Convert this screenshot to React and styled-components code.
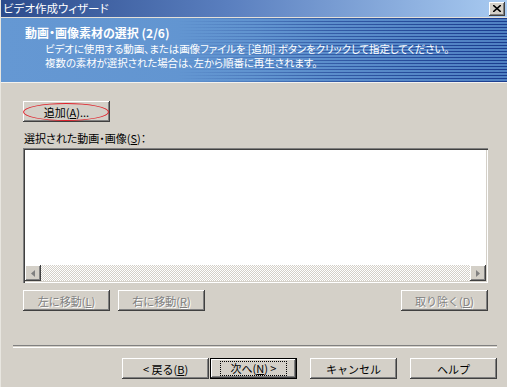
import React from "react";
import styled, { createGlobalStyle } from "styled-components";

const GlobalStyle = createGlobalStyle`
  html, body {
    margin: 0;
    padding: 0;
    background: #d4d0c8;
  }
  body {
    font-family: "Noto Sans CJK JP", "DejaVu Sans", sans-serif;
    font-size: 12px;
    font-feature-settings: "palt";
  }
`;

const Window = styled.div`
  width: 507px;
  height: 387px;
  background: #d4d0c8;
  display: flex;
  flex-direction: column;
  overflow: hidden;
  box-sizing: border-box;
  border-left: 1px solid #e8e6e0;
`;

const TitleBar = styled.div`
  height: 17px;
  display: flex;
  align-items: center;
  justify-content: space-between;
  padding: 0 2px 0 2px;
  background: linear-gradient(to right, #2c4b8c 0%, #5a7fbf 45%, #a9cbf1 100%);
  color: #fff;
  font-size: 11.5px;
  line-height: 17px;
  border-bottom: 1px solid #e4e0d8;
`;

const CloseBox = styled.div`
  width: 16px;
  height: 14px;
  background: #d4d0c8;
  box-shadow: inset -1px -1px #404040, inset 1px 1px #fff, inset -2px -2px #808080;
  display: flex;
  align-items: center;
  justify-content: center;
  svg { display: block; }
`;

const Header = styled.div`
  position: relative;
  height: 65px;
  padding: 6px 0 0 24px;
  box-sizing: border-box;
  background: linear-gradient(to right, #6598d3 0%, #6194d0 50%, #4f80c2 100%);
  color: #fff;
  border-bottom: 1px solid #f4f2ee;
  overflow: hidden;

  &::after {
    content: "";
    position: absolute;
    inset: 0;
    background: repeating-linear-gradient(
      to bottom,
      #1b3c8e 0px,
      #1b3c8e 1px,
      transparent 1px,
      transparent 3px
    );
    -webkit-mask-image: linear-gradient(to right, transparent 35%, rgba(0,0,0,0.6) 65%, #000 100%);
    mask-image: linear-gradient(to right, transparent 35%, rgba(0,0,0,0.6) 65%, #000 100%);
  }
`;

const HeaderText = styled.div`
  position: relative;
  z-index: 1;
`;

const HeaderTitle = styled.div`
  font-weight: bold;
  font-size: 12px;
  line-height: 18px;
`;

const HeaderLine = styled.div`
  padding-left: 20px;
  font-size: 10.5px;
  line-height: 14px;
  height: 14px;
  letter-spacing: -0.1px;
  white-space: nowrap;
`;

const Body = styled.div`
  display: flex;
  flex-direction: column;
  padding: 18px 20px 0 22px;
`;

const ButtonWrap = styled.div`
  position: relative;
  align-self: flex-start;
`;

const Button = styled.button`
  width: ${(p) => p.$w || 87}px;
  height: 21px;
  padding: 0;
  border: none;
  background: #d4d0c8;
  font-family: inherit;
  font-size: 11px;
  color: ${(p) => (p.disabled ? "#808080" : "#000")};
  text-shadow: ${(p) => (p.disabled ? "1px 1px 0 #fff" : "none")};
  box-shadow: ${(p) =>
    p.$default
      ? "inset 0 0 0 1px #000, inset -2px -2px #404040, inset 2px 2px #fff, inset -3px -3px #808080"
      : "inset -1px -1px #404040, inset 1px 1px #fff, inset -2px -2px #808080"};
  display: flex;
  align-items: center;
  justify-content: center;
  position: relative;
`;

const Focus = styled.span`
  border: 1px dotted #000;
  padding: 0 10px;
  line-height: 13px;
`;

const Ring = styled.div`
  position: absolute;
  left: 0;
  top: 2px;
  width: 86px;
  height: 18px;
  border: 1px solid #e0202a;
  border-radius: 50%;
  box-sizing: border-box;
  pointer-events: none;
`;

const Label = styled.div`
  margin-top: 9px;
  font-size: 11px;
  line-height: 15px;
  margin-left: 1px;
`;

const ListBox = styled.div`
  margin-top: 2px;
  width: 465px;
  height: 135px;
  box-sizing: border-box;
  background: #fff;
  box-shadow: inset 1px 1px #808080, inset 2px 2px #404040, inset -1px -1px #fff, inset -2px -2px #d4d0c8;
  padding: 2px;
  display: flex;
  flex-direction: column;
  justify-content: flex-end;
`;

const ScrollBar = styled.div`
  height: 16px;
  display: flex;
  background-color: #fff;
  background-image: conic-gradient(#d4d0c8 25%, #fff 0 50%, #d4d0c8 0 75%, #fff 0);
  background-size: 2px 2px;
`;

const ScrollTrack = styled.div`
  flex: 1;
`;

const ArrowBox = styled.div`
  width: 16px;
  height: 16px;
  background: #d4d0c8;
  box-shadow: inset -1px -1px #404040, inset 1px 1px #fff, inset -2px -2px #808080;
  display: flex;
  align-items: center;
  justify-content: center;
  svg { display: block; }
`;

const ActionRow = styled.div`
  margin-top: 7px;
  width: 465px;
  display: flex;
  gap: 8px;
`;

const Spacer = styled.div`
  flex: 1;
`;

const Separator = styled.div`
  margin: 34px 10px 0 12px;
  height: 1px;
  border-top: 1px solid #808080;
  border-bottom: 1px solid #fff;
`;

const Footer = styled.div`
  margin-top: 10px;
  display: flex;
  padding-left: 121px;
`;

const FooterGap = styled.div`
  width: ${(p) => p.$w}px;
`;

const Arrow = ({ dir }) => (
  <svg width="4" height="7" viewBox="0 0 4 7">
    {dir === "left" ? (
      <path d="M4 0 L0 3.5 L4 7 Z" fill="#808080" />
    ) : (
      <path d="M0 0 L4 3.5 L0 7 Z" fill="#808080" />
    )}
  </svg>
);

const U = styled.span`
  text-decoration: underline;
`;

export default function App() {
  return (
    <>
      <GlobalStyle />
      <Window>
        <TitleBar>
          <span>ビデオ作成ウィザード</span>
          <CloseBox>
            <svg width="8" height="7" viewBox="0 0 8 7">
              <path d="M0 0 L8 7 M8 0 L0 7" stroke="#000" strokeWidth="1.6" />
            </svg>
          </CloseBox>
        </TitleBar>
        <Header>
          <HeaderText>
            <HeaderTitle>動画・画像素材の選択 (2/6)</HeaderTitle>
            <HeaderLine>
              ビデオに使用する動画、または画像ファイルを [追加] ボタンをクリックして指定してください。
            </HeaderLine>
            <HeaderLine>複数の素材が選択された場合は、左から順番に再生されます。</HeaderLine>
          </HeaderText>
        </Header>
        <Body>
          <ButtonWrap>
            <Button>
              追加(<U>A</U>)...
            </Button>
            <Ring />
          </ButtonWrap>
          <Label>
            選択された動画・画像(<U>S</U>)：
          </Label>
          <ListBox>
            <ScrollBar>
              <ArrowBox>
                <Arrow dir="left" />
              </ArrowBox>
              <ScrollTrack />
              <ArrowBox>
                <Arrow dir="right" />
              </ArrowBox>
            </ScrollBar>
          </ListBox>
          <ActionRow>
            <Button disabled>
              左に移動(<U>L</U>)
            </Button>
            <Button disabled>
              右に移動(<U>R</U>)
            </Button>
            <Spacer />
            <Button disabled>
              取り除く(<U>D</U>)
            </Button>
          </ActionRow>
        </Body>
        <Separator />
        <Footer>
          <Button>
            &lt; 戻る(<U>B</U>)
          </Button>
          <FooterGap $w={1} />
          <Button $default>
            <Focus>
              次へ(<U>N</U>) &gt;
            </Focus>
          </Button>
          <FooterGap $w={13} />
          <Button>キャンセル</Button>
          <FooterGap $w={13} />
          <Button>ヘルプ</Button>
        </Footer>
      </Window>
    </>
  );
}
